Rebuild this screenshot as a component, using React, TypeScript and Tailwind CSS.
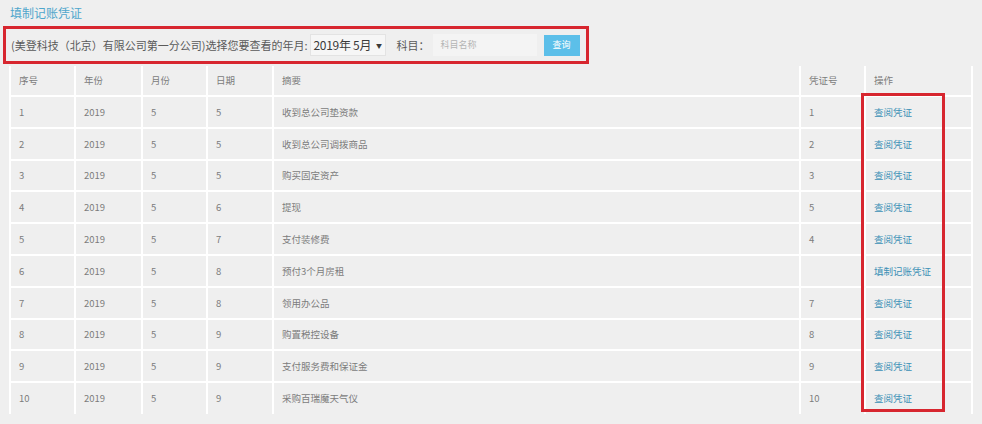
import React from "react";

const rows: [string, string, string, string, string, string, string][] = [
  ["1", "2019", "5", "5", "收到总公司垫资款", "1", "查阅凭证"],
  ["2", "2019", "5", "5", "收到总公司调拨商品", "2", "查阅凭证"],
  ["3", "2019", "5", "5", "购买固定资产", "3", "查阅凭证"],
  ["4", "2019", "5", "6", "提现", "5", "查阅凭证"],
  ["5", "2019", "5", "7", "支付装修费", "4", "查阅凭证"],
  ["6", "2019", "5", "8", "预付3个月房租", "", "填制记账凭证"],
  ["7", "2019", "5", "8", "领用办公品", "7", "查阅凭证"],
  ["8", "2019", "5", "9", "购置税控设备", "8", "查阅凭证"],
  ["9", "2019", "5", "9", "支付服务费和保证金", "9", "查阅凭证"],
  ["10", "2019", "5", "9", "采购百瑞魔天气仪", "10", "查阅凭证"],
];

const widths = ["w-[65px]", "w-[67px]", "w-[65px]", "w-[66px]", "w-[527px]", "w-[65px]", "w-[107px]"];
const headers = ["序号", "年份", "月份", "日期", "摘要", "凭证号", "操作"];

export default function App() {
  return (
    <div
      className="w-[982px] h-[424px] bg-[#efefef] overflow-hidden relative"
      style={{ fontFamily: '"Noto Sans CJK SC", "Noto Sans", sans-serif' }}
    >
      <div className="pt-[4px] pl-[10px] h-[26px] text-[12px] text-[#4ea6cc] leading-[18px]">填制记账凭证</div>
      <div className="ml-[3px] w-[586px] h-[38px] border-[3px] border-[#d7262f] flex items-center pl-[5px] text-[11px] text-[#5a5a5a]">
        <span>(美登科技（北京）有限公司第一分公司)选择您要查看的年月:</span>
        <div className="ml-[2px] h-[22px] w-[76px] bg-[#f6f6f6] border border-[#e3e3e3] flex items-center pl-[3px] text-[12px] text-[#3a3a3a]">
          <span className="tracking-[-0.3px]">2019年 5月</span>
          <span className="ml-[5px] text-[6px]">▼</span>
        </div>
        <span className="ml-[11px] text-[11px] text-[#5a5a5a]">科目：</span>
        <div className="ml-[3px] h-[22px] w-[104px] bg-[#f4f4f4] flex items-center pl-[8px] text-[9px] text-[#b5b5b5]">科目名称</div>
        <div className="ml-[7px] h-[21px] w-[36px] bg-[#5cbfe9] flex items-center justify-center text-[9px] text-white">查询</div>
      </div>
      <div className="ml-[9px] mt-[2px]">
        <table className="border-collapse text-[9.5px] text-[#7c7c7c]">
          <thead>
            <tr className="h-[30px]">
              {headers.map((h, i) => (
                <th key={i} className={`${widths[i]} border-2 border-white border-t-0 text-left font-normal pl-[8px]`}>
                  {h}
                </th>
              ))}
            </tr>
          </thead>
          <tbody>
            {rows.map((r, ri) => (
              <tr key={ri} className="h-[31.8px]">
                {r.map((c, ci) => (
                  <td
                    key={ci}
                    className={`${widths[ci]} border-2 border-white ${ri === rows.length - 1 ? "border-b-0" : ""} pl-[8px] ${ci === 6 ? "text-[#3b8fb6]" : ""}`}
                  >
                    {c}
                  </td>
                ))}
              </tr>
            ))}
          </tbody>
        </table>
      </div>
      <div className="absolute left-[861px] top-[93px] w-[84px] h-[319px] border-[3px] border-[#d7262f]" />
    </div>
  );
}
